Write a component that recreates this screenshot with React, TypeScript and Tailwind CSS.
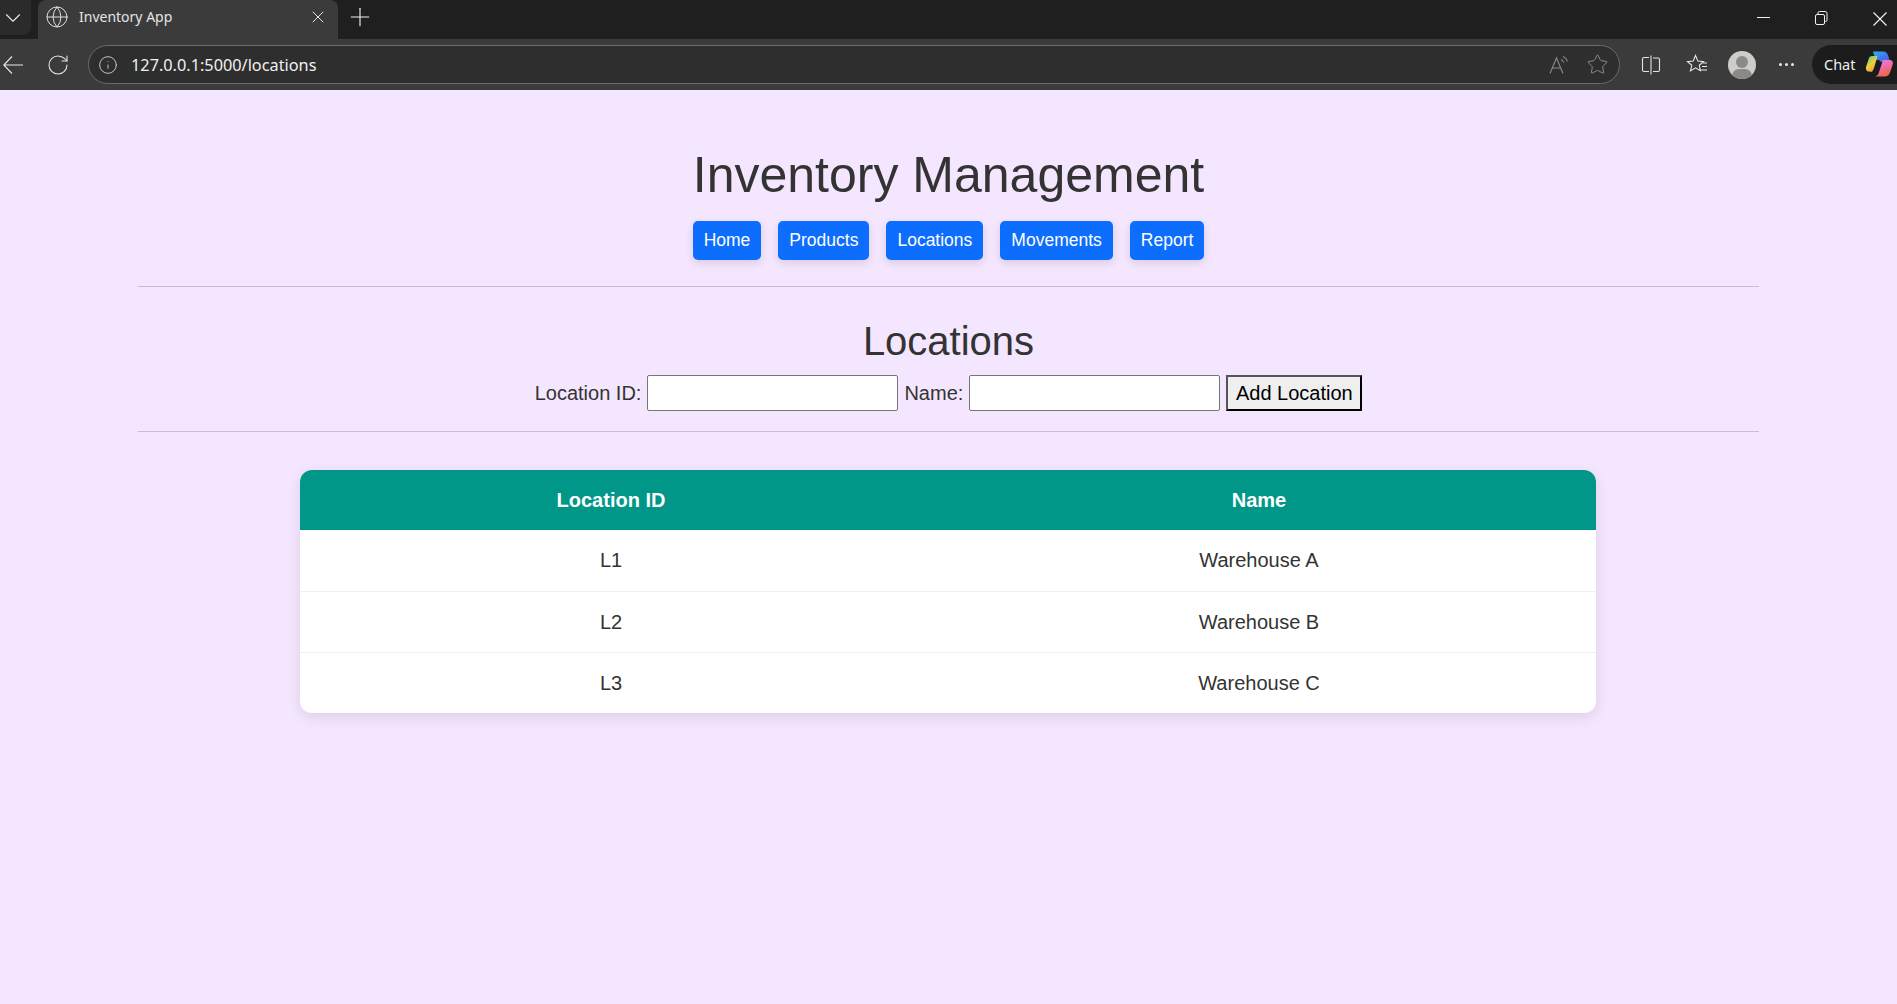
import React from "react";
import { ChevronDown, Globe, X, Plus, RotateCw, Info, Star } from "lucide-react";

const navs = ["Home", "Products", "Locations", "Movements", "Report"];
const rows = [
  ["L1", "Warehouse A"],
  ["L2", "Warehouse B"],
  ["L3", "Warehouse C"],
];

function TabStrip() {
  return (
    <div className="h-[39px] bg-[#1f1f1f] flex items-stretch relative text-white">
      <div className="w-[31px] h-[35px] bg-[#2b2b2b] rounded-br-[8px] flex items-center justify-center shrink-0 pr-[5px]">
        <ChevronDown size={26} strokeWidth={1} className="text-[#e8e8e8] shrink-0" />
      </div>
      <div className="ml-[7px] w-[300px] bg-[#3b3b3b] rounded-t-[8px] flex items-center pl-[7px] pr-[10px] pb-[5px] shrink-0">
        <Globe size={24} strokeWidth={0.95} className="text-[#e6e6e6] shrink-0" />
        <span className="ml-[10px] flex-1 pb-[2px] text-[14px] text-[#e4e4e4] font-['Noto_Sans',sans-serif] whitespace-nowrap">Inventory App</span>
        <X size={20} strokeWidth={1.2} className="text-[#e6e6e6] shrink-0" />
      </div>
      <div className="ml-[7px] flex items-center pb-[6px]">
        <Plus size={30} strokeWidth={0.9} className="text-[#efefef]" />
      </div>
      <div className="ml-auto flex items-center h-full">
        <svg width="140" height="39" viewBox="0 0 140 39" fill="none" stroke="#f0f0f0" strokeWidth="1">
          <path d="M0 17.5H13" />
          <rect x="58.5" y="14.5" width="9" height="10" rx="1.5" />
          <path d="M61 14v-1a1.5 1.5 0 0 1 1.5-1.5h5.5a2 2 0 0 1 2 2v6.5a1.5 1.5 0 0 1-1.5 1.5H68" />
          <path d="M116.5 12.5L129.500 25.500M129.500 12.500L116.500 25.500" strokeWidth="1.2" />
        </svg>
      </div>
    </div>
  );
}

function CopilotLogo() {
  return (
    <svg width="29" height="29" viewBox="0 0 29 29">
      <defs>
        <linearGradient id="cA" x1="0" y1="0" x2="1" y2="1">
          <stop offset="0" stopColor="#2bb8f0" />
          <stop offset="0.5" stopColor="#3d7bf0" />
          <stop offset="1" stopColor="#6a4ce0" />
        </linearGradient>
        <linearGradient id="cB" x1="0" y1="0" x2="0.6" y2="1">
          <stop offset="0" stopColor="#37c98f" />
          <stop offset="0.55" stopColor="#e9d23e" />
          <stop offset="1" stopColor="#f3a13a" />
        </linearGradient>
        <linearGradient id="cC" x1="0" y1="0" x2="0.5" y2="1">
          <stop offset="0" stopColor="#d78bf0" />
          <stop offset="0.6" stopColor="#f06aa0" />
          <stop offset="1" stopColor="#f0653f" />
        </linearGradient>
      </defs>
      <path d="M8 1.500h10.500c2.500 0 4 1.800 4.700 4L25 12h-9l-2 -2h-3.500z" fill="url(#cA)" />
      <path d="M7 6h5.500l-3.500 12c-.6 2-1.500 3-2 3.800l-4-.3C1.200 21 .500 19 1 17L4 8c.4-1.300 1.500-2 3-2z" fill="url(#cB)" />
      <path d="M18 10h6.500c2.500 0 4 2 3.300 4.200L25 22.500c-.8 2.500-2.500 4-5 4H9.500c2 0 3.500-1.500 4.200-3.500z" fill="url(#cC)" />
    </svg>
  );
}

function Toolbar() {
  return (
    <div className="h-[51px] bg-[#3b3b3b] flex items-center text-[#e8e8e8] relative">
      <div className="w-[31px] flex justify-start pl-[3px] shrink-0">
        <svg width="20" height="20" viewBox="0 0 20 20" fill="none" stroke="#e8e8e8" strokeWidth="1.1">
          <path d="M0.500 10H20M9 1.500L0.800 10L9 18.500" />
        </svg>
      </div>
      <div className="w-[57px] flex justify-center shrink-0 pr-[4px]">
        <RotateCw size={24} strokeWidth={1.05} />
      </div>
      <div className="w-[1532px] h-[39px] rounded-full border border-[#6b6b6b] bg-[#2e2e2e] flex items-center pl-[9px] pr-[10px] shrink-0">
        <Info size={20} strokeWidth={1.1} className="text-[#cfcfcf] shrink-0" />
        <span className="ml-[13px] flex-1 pt-[1px] text-[16.3px] text-[#f0f0f0] font-['Noto_Sans',sans-serif]">127.0.0.1:5000/locations</span>
        <svg width="22" height="22" viewBox="0 0 22 22" fill="none" stroke="#8a8a8a" strokeWidth="1.1" className="mr-[16px]">
          <path d="M2 19.500L8.500 4l6.500 15.500M4.500 14h8" />
          <path d="M13 5.500c1.500.6 2.300 1.700 2.800 3.200M15 2.500c2.500 1 3.800 2.800 4.500 5" />
        </svg>
        <Star size={23} strokeWidth={1} className="text-[#8f8f8f]" />
      </div>
      <svg width="20" height="20" viewBox="0 0 20 20" fill="none" stroke="#e4e4e4" strokeWidth="1.1" className="ml-[21px] shrink-0">
        <path d="M8 2.500H3a1.500 1.500 0 0 0-1.500 1.500v11A1.500 1.500 0 0 0 3 16.500h5M12 3h5a1.500 1.500 0 0 1 1.500 1.500v10.500a1.500 1.500 0 0 1-1.500 1.500h-5" />
        <path d="M10 .5v19" />
      </svg>
      <svg width="22" height="22" viewBox="0 0 22 22" fill="none" stroke="#e8e8e8" strokeWidth="1.1" className="ml-[25px] shrink-0">
        <path d="M9.500 1.500l2.400 5.600 5.600.5-4.200 3.700 1 5.400-4.800-2.900-5 3.100 1.300-5.600L1.500 7.600l5.600-.5z" />
        <path d="M14 16h7M16 12.500h5M17 9h4" />
      </svg>
      <div className="ml-[20px] w-[28px] h-[28px] rounded-full bg-[#cfcdc9] shrink-0 relative overflow-hidden">
        <div className="absolute left-[8px] top-[5px] w-[12px] h-[12px] rounded-full bg-[#8c8a86]" />
        <div className="absolute left-[4px] top-[18px] w-[20px] h-[14px] rounded-full bg-[#8c8a86]" />
      </div>
      <div className="ml-[23px] flex gap-[3px] shrink-0">
        <span className="w-[3px] h-[3px] rounded-full bg-[#e8e8e8]" />
        <span className="w-[3px] h-[3px] rounded-full bg-[#e8e8e8]" />
        <span className="w-[3px] h-[3px] rounded-full bg-[#e8e8e8]" />
      </div>
      <div className="ml-[18px] h-[39px] flex-1 bg-[#1c1c1c] rounded-l-full flex items-center pl-[12px] overflow-hidden">
        <span className="text-[14.5px] text-[#f0f0f0] font-['Noto_Sans',sans-serif]">Chat</span>
        <span className="ml-[9px] shrink-0"><CopilotLogo /></span>
      </div>
    </div>
  );
}

export default function App() {
  return (
    <div className="h-[1004px] overflow-hidden flex flex-col bg-[#f4e6ff]">
      <TabStrip />
      <Toolbar />
      <main className="flex-1 px-[138px] font-['Liberation_Sans',Arial,sans-serif] text-[20px] text-[#333] text-center">
        <h1 className="text-[50px] leading-[58px] font-normal pt-[56px] mb-[17px]">Inventory Management</h1>
        <nav className="flex justify-center gap-[17px]">
          {navs.map((n) => (
            <a key={n} className="h-[39px] px-[11px] flex items-center rounded-[5px] bg-[#0d6efd] text-white text-[17.5px] shadow-[0_3px_8px_rgba(0,0,0,0.12)]">
              {n}
            </a>
          ))}
        </nav>
        <hr className="mt-[26px] border-0 border-t border-[#c9bdd6]" />
        <h2 className="text-[40px] leading-[46px] font-normal mt-[31px] mb-[11px]">Locations</h2>
        <form className="flex justify-center items-center h-[36px]">
          <label>Location ID:</label>
          <input className="ml-[6px] w-[251px] h-[36px] bg-white border border-[#767676] rounded-[2px]" />
          <label className="ml-[6px]">Name:</label>
          <input className="ml-[6px] w-[251px] h-[36px] bg-white border border-[#767676] rounded-[2px]" />
          <button type="button" className="ml-[6px] w-[136px] h-[36px] bg-[#efefef] text-black border-2 border-t-[#555] border-l-[#555] border-r-black border-b-black">Add Location</button>
        </form>
        <hr className="mt-[20px] border-0 border-t border-[#c9bdd6]" />
        <div className="mt-[38px] ml-[162px] w-[1296px] rounded-[12px] overflow-hidden bg-white shadow-[0_4px_14px_rgba(0,0,0,0.1)]">
          <table className="w-full table-fixed border-collapse">
            <thead>
              <tr className="bg-[#009688] text-white h-[60px]">
                <th className="w-[622px] font-bold">Location ID</th>
                <th className="font-bold">Name</th>
              </tr>
            </thead>
            <tbody>
              {rows.map((r, i) => (
                <tr key={r[0]} className={i < 2 ? "h-[61px] border-b border-[#eeeeee]" : "h-[61px]"}>
                  <td>{r[0]}</td>
                  <td>{r[1]}</td>
                </tr>
              ))}
            </tbody>
          </table>
        </div>
      </main>
    </div>
  );
}
